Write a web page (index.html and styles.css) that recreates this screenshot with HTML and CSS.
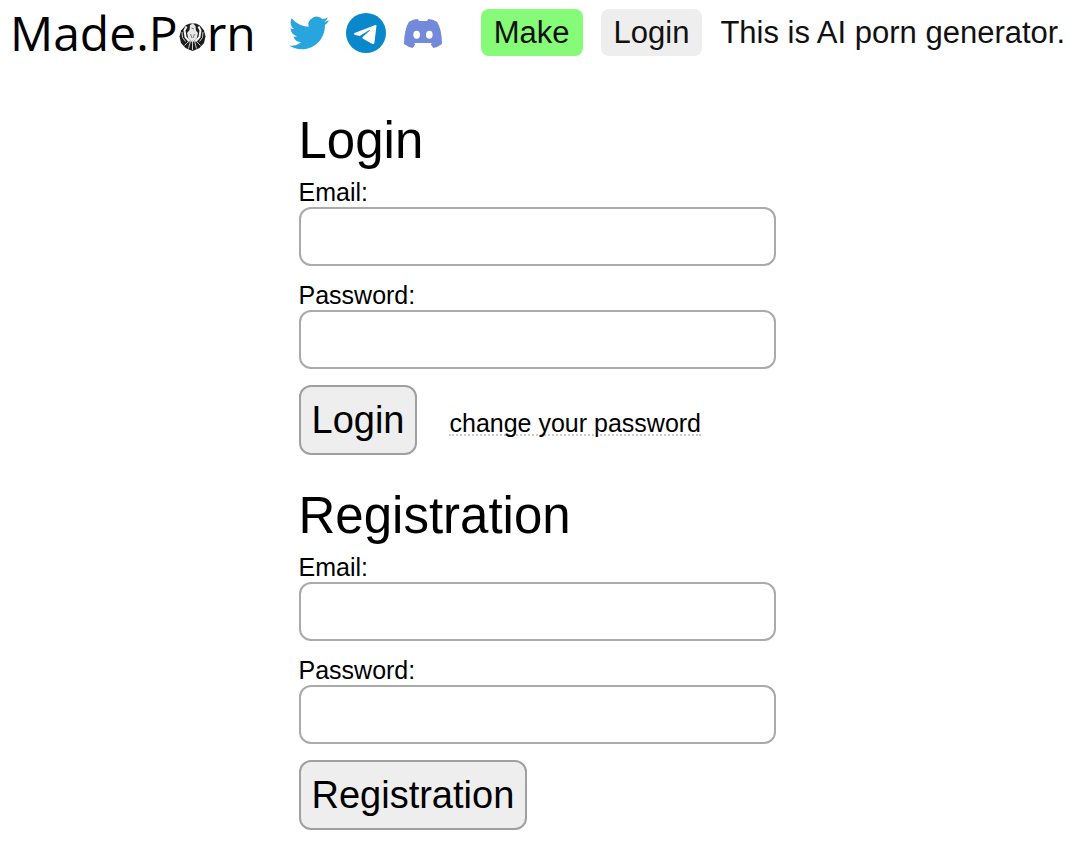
FILE: index.html
```html
<!DOCTYPE html>
<html lang="en">
<head>
  <meta charset="UTF-8">
  <meta name="viewport" content="width=device-width, initial-scale=1">
  <title>Made.Porn - Login</title>
  <link rel="stylesheet" href="styles.css">
</head>
<body>

  <header class="header">
    <a href="/" class="logo" aria-label="Made.Porn">
      <span>Made.P</span>
      <svg class="logo-eagle" viewBox="0 0 54 58" aria-hidden="true">
        <path d="M14 6l8-3h12l8 4 8 10 3 12-3 13-9 10-9 4-5 2-5-2-9-4-9-10-3-13 3-12z" fill="#1c1c1c"/>
        <path d="M22 6l6-3 5 5 1 9 4 5-3 12-8 7-8-7-3-12 5-6z" fill="#e6e6e6"/>
        <path d="M15 9l-4 8 2 13 8 9M39 9l4 8-2 13-8 9" fill="none" stroke="#f4f4f4" stroke-width="4"/>
        <path d="M6 20l1 11 6 8M48 20l-1 11-6 8M20 38l-9 9M34 38l9 9M23 38l-4 15M31 38l4 15M27 36v20" fill="none" stroke="#ccc" stroke-width="2"/>
        <path d="M25 12l5 2M23 24l3 8M31 24l-3 8" stroke="#777" stroke-width="2"/>
      </svg>
      <span>rn</span>
    </a>

    <nav class="social">
      <a href="#" aria-label="Twitter">
        <svg viewBox="0 0 24 24"><path fill="#28a5de" d="M23.953 4.57a10 10 0 01-2.825.775 4.958 4.958 0 002.163-2.723c-.951.555-2.005.959-3.127 1.184a4.92 4.92 0 00-8.384 4.482C7.69 8.095 4.067 6.13 1.64 3.162a4.822 4.822 0 00-.666 2.475c0 1.71.87 3.213 2.188 4.096a4.904 4.904 0 01-2.228-.616v.06a4.923 4.923 0 003.946 4.827 4.996 4.996 0 01-2.212.085 4.936 4.936 0 004.604 3.417 9.867 9.867 0 01-6.102 2.105c-.39 0-.779-.023-1.17-.067a13.995 13.995 0 007.557 2.209c9.053 0 13.998-7.496 13.998-13.985 0-.21 0-.42-.015-.63A9.935 9.935 0 0024 4.59z"/></svg>
      </a>
      <a href="#" aria-label="Telegram">
        <svg viewBox="0 0 118 118"><circle cx="59" cy="59" r="59" fill="#0a88cc"/><path fill="#fff" d="M90 37q-1-3-5-1L25 59q-4 3 0 5l15 4 29-18q5-2 2 1L49 71q-2 3 1 5l27 15q6 2 7-4z"/></svg>
      </a>
      <a href="#" aria-label="Discord">
        <svg viewBox="0 0 120 120"><path fill="#7389da" fill-rule="evenodd" d="M18 26q13-7 26-8l4 6h24l4-6q13 1 26 8 8 12 11 29 4 17 4 38-12 9-26 12l-8-11 4-4H33l4 4-8 11Q15 102 3 93q0-21 4-38 3-17 11-29zM41 53a10 12 0 100 24 10 12 0 100-24zM79 53a10 12 0 100 24 10 12 0 100-24z"/></svg>
      </a>
    </nav>

    <div class="menu">
      <a href="#" class="pill pill-make">Make</a>
      <a href="#" class="pill">Login</a>
      <span>This is AI porn generator.</span>
    </div>
  </header>

  <main class="content">
    <form action="#" method="POST">
      <h1>Login</h1>
      <label for="login-email">Email:</label>
      <input type="email" name="email" id="login-email">
      <label for="login-password">Password:</label>
      <input type="password" name="password" id="login-password">
      <div class="actions">
        <button type="submit">Login</button>
        <a href="#" class="change-password">change your password</a>
      </div>
    </form>

    <form action="#" method="POST">
      <h1>Registration</h1>
      <label for="reg-email">Email:</label>
      <input type="email" name="email" id="reg-email">
      <label for="reg-password">Password:</label>
      <input type="password" name="password" id="reg-password">
      <div class="actions">
        <button type="submit">Registration</button>
      </div>
    </form>
  </main>

</body>
</html>
```
FILE: styles.css
```css
* {
  box-sizing: border-box;
}

body {
  font-family: Arial, "Liberation Sans", sans-serif;
  font-size: 25px;
  line-height: 28px;
  color: #000;
  background: #fff;
  margin: 0;
}

a {
  color: inherit;
  text-decoration: none;
}

/* Header */
.header {
  display: flex;
  flex-wrap: wrap;
  align-items: center;
  padding: 9px 0 0 10px;
}

.logo {
  display: flex;
  align-items: center;
  gap: 1px;
  font-family: "Open Sans", sans-serif;
  font-size: 48px;
  font-weight: 500;
  line-height: 47px;
}

.logo-eagle {
  width: 27px;
  height: 29px;
  margin-top: 8px;
}

.social {
  display: flex;
  gap: 17px;
  margin-left: 33px;
}

.social svg {
  display: block;
  width: 40px;
  height: 40px;
}

.menu {
  display: flex;
  align-items: center;
  gap: 18px;
  margin-left: 38px;
  font-size: 31px;
  line-height: 47px;
  color: #111;
}

.pill {
  padding: 0 13px;
  border-radius: 8px;
  background: #eee;
}

.pill-make {
  background: #85fb77;
}

/* Forms */
.content {
  width: 100%;
  max-width: 477px;
  margin: 56px auto 12px;
}

form {
  margin-bottom: 32px;
}

h1 {
  margin: 0 0 9px;
  font-size: 51px;
  font-weight: normal;
  line-height: 58px;
}

label {
  display: block;
  padding-bottom: 2px;
  line-height: 26px;
}

input {
  display: block;
  width: 100%;
  height: 59px;
  margin-bottom: 16px;
  padding: 0 12px;
  font: inherit;
  border: 2px solid #aaa;
  border-radius: 12px;
}

.actions {
  display: flex;
  align-items: center;
  gap: 32px;
}

button {
  height: 70px;
  padding: 0 11px;
  font-family: inherit;
  font-size: 38px;
  color: #000;
  background: #eee;
  border: 2px solid #a0a0a0;
  border-radius: 12px;
  cursor: pointer;
}

.change-password {
  margin-top: 8px;
  line-height: 22px;
  border-bottom: 2px dotted #ccc;
}

@media (max-width: 600px) {
  .content {
    padding: 0 12px;
  }
}
```
